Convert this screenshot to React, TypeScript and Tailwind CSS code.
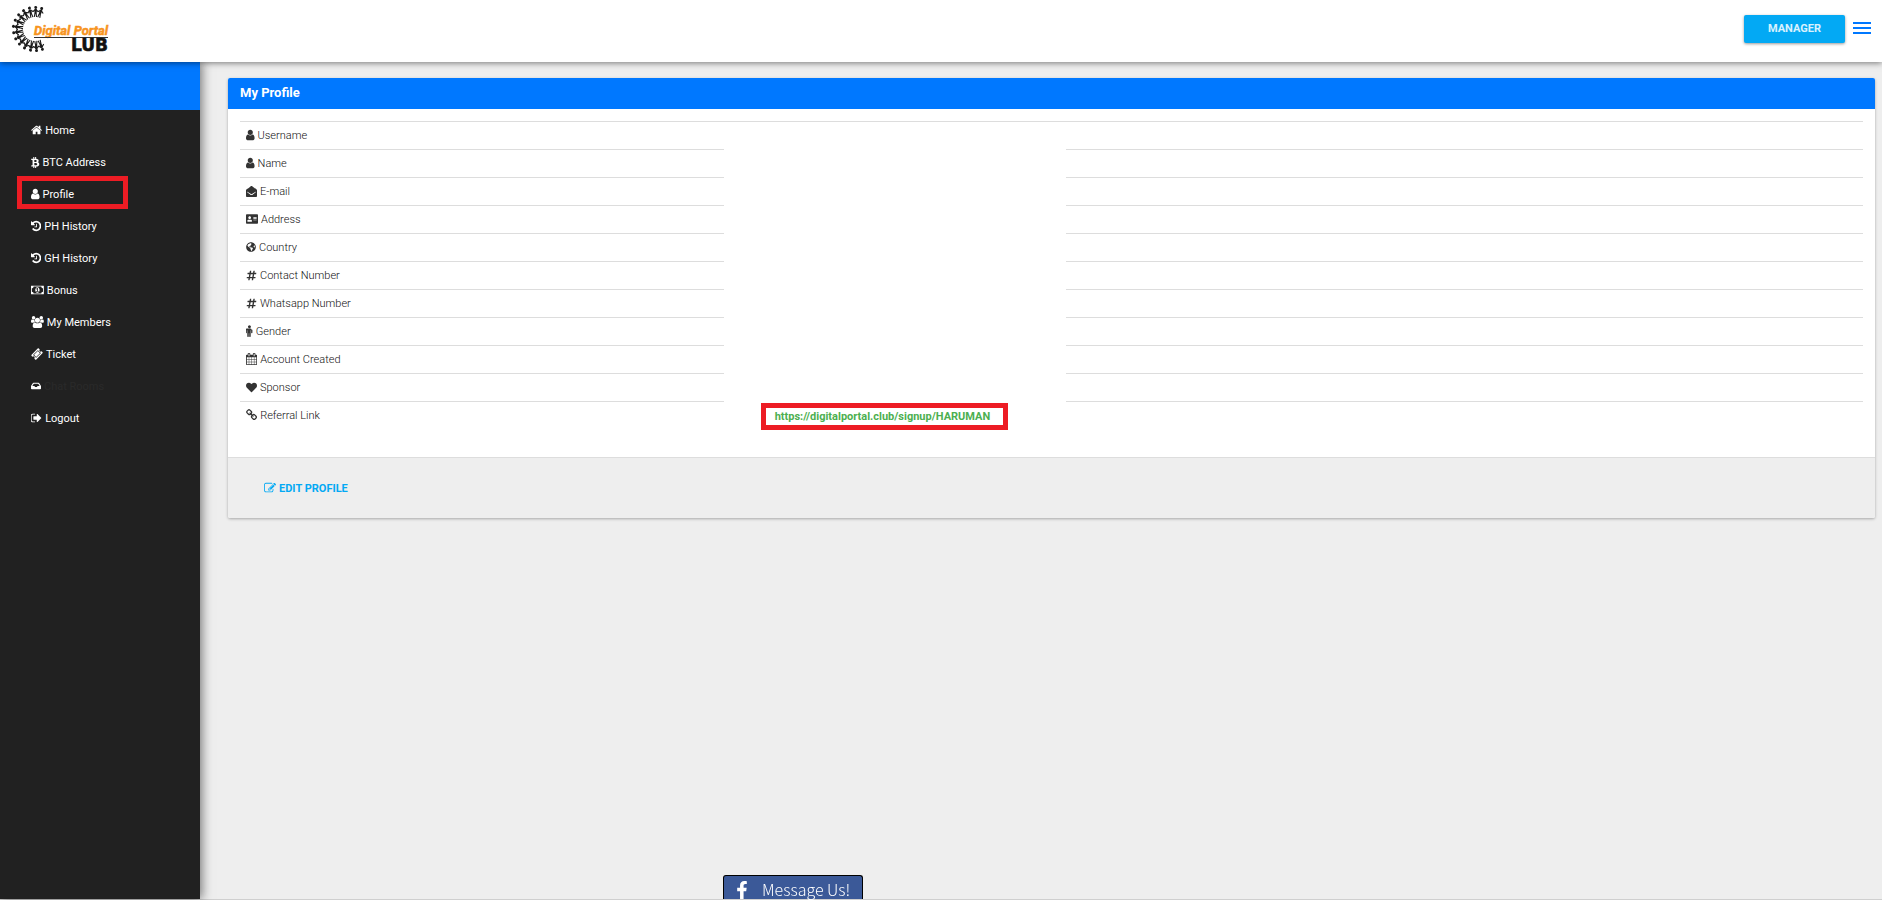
import type { ReactNode } from 'react';
import {
  FaAddressCard,
  FaEnvelopeOpen,
  FaFacebookF,
  FaGlobeAmericas,
  FaHashtag,
  FaHeart,
  FaInbox,
} from 'react-icons/fa';

const glyph = 'inline-block h-3 w-auto shrink-0';

function Glyph({ box, d }: { box: string; d: string }) {
  return (
    <svg viewBox={box} className={glyph} fill="currentColor" aria-hidden="true">
      <path d={d} />
    </svg>
  );
}

const HomeIcon = () => (
  <Glyph
    box="64 0 1664 1792"
    d="M1472 992v480q0 26-19 45t-45 19h-384v-384h-256v384h-384q-26 0-45-19t-19-45v-480q0-1 .5-3t.5-3l575-474 575 474q1 2 1 6zm223-69l-62 74q-8 9-21 11h-3q-13 0-21-7l-692-577-692 577q-12 8-24 7-13-2-21-11l-62-74q-8-10-7-23.5t11-21.5l719-599q32-26 76-26t76 26l244 204v-195q0-14 9-23t23-9h192q14 0 23 9t9 23v408l219 182q10 8 11 21.5t-7 23.5z"
  />
);
const BitcoinIcon = () => (
  <Glyph
    box="256 0 1280 1792"
    d="M1399 678q18 182-131 258 117 28 175 103t45 214q-7 71-32.5 125t-64.5 89-97 58.5-121.5 34.5-145.5 15v255h-154v-251q-80 0-122-1v252h-154v-255q-18 0-54-.5t-55-.5h-200l31-183h111q50 0 58-51v-402h16q-6-1-16-1v-287q-13-68-89-68h-111v-164l212 1q64 0 97-1v-252h154v247q82-2 122-2v-245h154v252q79 7 140 22.5t113 45 82.5 78 36.5 114.5zm-215 545q0-36-15-64t-37-46-57.5-30.5-65.5-18.5-74-9-69-3-64.5 1-47.5 1v338q8 0 37 .5t48 .5 53-1.5 58.5-4 57-8.5 55.5-14 47.5-21 39.5-30 24.5-40 9.5-51zm-71-476q0-33-12.5-58.5t-30.5-42-48-28-55-16.5-61.5-8-58-2.5-54 1-39.5.5v307q5 0 34.5.5t46.5 0 50-2 55-5.5 51.5-11 48.5-18.5 37-27 27-38.5 9-51z"
  />
);
const UserIcon = () => (
  <Glyph
    box="256 0 1280 1792"
    d="M1536 1399q0 109-62.5 187t-150.5 78h-854q-88 0-150.5-78t-62.5-187q0-85 8.5-160.5t31.5-152 58.5-131 94-89 134.5-34.5q131 128 313 128t313-128q76 0 134.5 34.5t94 89 58.5 131 31.5 152 8.5 160.5zm-256-887q0 159-112.5 271.5t-271.5 112.5-271.5-112.5-112.5-271.5 112.5-271.5 271.5-112.5 271.5 112.5 112.5 271.5z"
  />
);
const HistoryIcon = () => (
  <Glyph
    box="128 0 1536 1792"
    d="M1664 896q0 156-61 298t-164 245-245 164-298 61q-172 0-327-72.5t-264-204.5q-7-10-6.5-22.5t8.5-20.5l137-138q10-9 25-9 16 2 23 12 73 95 179 147t225 52q104 0 198.5-40.5t163.5-109.5 109.5-163.5 40.5-198.5-40.5-198.5-109.5-163.5-163.5-109.5-198.5-40.5q-98 0-188 35.5t-160 101.5l137 138q31 30 14 69-17 40-59 40h-448q-26 0-45-19t-19-45v-448q0-42 40-59 39-17 69 14l130 129q107-101 244.5-156.5t284.5-55.5q156 0 298 61t245 164 164 245 61 298zm-640-288v448q0 14-9 23t-23 9h-320q-14 0-23-9t-9-23v-64q0-14 9-23t23-9h224v-352q0-14 9-23t23-9h64q14 0 23 9t9 23z"
  />
);
const MoneyIcon = () => (
  <Glyph
    box="0 0 1920 1792"
    d="M768 1152h384v-96h-128v-448h-114l-148 137 77 80q42-37 55-57h2v288h-128v96zm512-256q0 70-21 142t-59.5 134-101.5 101-138 39-138-39-101.5-101-59.5-134-21-142 21-142 59.5-134 101.5-101 138-39 138 39 101.5 101 59.5 134 21 142zm512 256v-512q-106 0-181-75t-75-181h-1152q0 106-75 181t-181 75v512q106 0 181 75t75 181h1152q0-106 75-181t181-75zm128-832v1152q0 26-19 45t-45 19h-1792q-26 0-45-19t-19-45v-1152q0-26 19-45t45-19h1792q26 0 45 19t19 45z"
  />
);
const UsersIcon = () => (
  <Glyph
    box="64 0 1920 1792"
    d="M657 896q-162 5-265 128h-134q-82 0-138-40.5t-56-118.5q0-353 124-353 6 0 43.5 21t97.5 42.5 119 21.5q67 0 133-23-5 37-5 66 0 139 81 256zm1071 637q0 120-73 189.5t-194 69.5h-874q-121 0-194-69.5t-73-189.5q0-53 3.5-103.5t14-109 26.5-108.5 43-97.5 62-81 85.5-53.5 111.5-20q10 0 43 21.5t73 48 107 48 135 21.5 135-21.5 107-48 73-48 43-21.5q61 0 111.5 20t85.5 53.5 62 81 43 97.5 26.5 108.5 14 109 3.5 103.5zm-1024-1277q0 106-75 181t-181 75-181-75-75-181 75-181 181-75 181 75 75 181zm704 384q0 159-112.5 271.5t-271.5 112.5-271.5-112.5-112.5-271.5 112.5-271.5 271.5-112.5 271.5 112.5 112.5 271.5zm576 225q0 78-56 118.5t-138 40.5h-134q-103-123-265-128 81-117 81-256 0-29-5-66 66 23 133 23 59 0 119-21.5t97.5-42.5 43.5-21q124 0 124 353zm-128-609q0 106-75 181t-181 75-181-75-75-181 75-181 181-75 181 75 75 181z"
  />
);
const TicketIcon = () => (
  <Glyph
    box="0 0 1792 1792"
    d="M1024 452l316 316-572 572-316-316zm-211 979l618-618q19-19 19-45t-19-45l-362-362q-18-18-45-18t-45 18l-618 618q-19 19-19 45t19 45l362 362q18 18 45 18t45-18zm889-637l-907 908q-37 37-90.5 37t-90.5-37l-126-126q56-56 56-136t-56-136-136-56-136 56l-125-126q-37-37-37-90.5t37-90.5l907-906q37-37 90.5-37t90.5 37l125 125q-56 56-56 136t56 136 136 56 136-56l126 125q37 37 37 90.5t-37 90.5z"
  />
);
const SignOutIcon = () => (
  <Glyph
    box="96 0 1664 1792"
    d="M704 1440q0 4 1 20t.5 26.5-3 23.5-10 19.5-20.5 6.5h-320q-119 0-203.5-84.5t-84.5-203.5v-704q0-119 84.5-203.5t203.5-84.5h320q13 0 22.5 9.5t9.5 22.5q0 4 1 20t.5 26.5-3 23.5-10 19.5-20.5 6.5h-320q-66 0-113 47t-47 113v704q0 66 47 113t113 47h312l11.5 1 11.5 3 8 5.5 7 9 2 13.5zm928-544q0 26-19 45l-544 544q-19 19-45 19t-45-19-19-45v-288h-448q-26 0-45-19t-19-45v-384q0-26 19-45t45-19h448v-288q0-26 19-45t45-19 45 19l544 544q19 19 19 45z"
  />
);
const MaleIcon = () => (
  <Glyph
    box="384 0 1024 1792"
    d="M1344 704v416q0 40-28 68t-68 28-68-28-28-68v-352h-64v912q0 46-33 79t-79 33-79-33-33-79v-464h-64v464q0 46-33 79t-79 33-79-33-33-79v-912h-64v352q0 40-28 68t-68 28-68-28-28-68v-416q0-80 56-136t136-56h512q80 0 136 56t56 136zm-224-448q0 93-65.5 158.5t-158.5 65.5-158.5-65.5-65.5-158.5 65.5-158.5 158.5-65.5 158.5 65.5 65.5 158.5z"
  />
);
const CalendarIcon = () => (
  <Glyph
    box="64 0 1664 1792"
    d="M192 1664h288v-288h-288v288zm352 0h320v-288h-320v288zm-352-352h288v-320h-288v320zm352 0h320v-320h-320v320zm-352-384h288v-288h-288v288zm736 736h320v-288h-320v288zm-384-736h320v-288h-320v288zm768 736h288v-288h-288v288zm-384-352h320v-320h-320v320zm-352-864v-288q0-13-9.5-22.5t-22.5-9.5h-64q-13 0-22.5 9.5t-9.5 22.5v288q0 13 9.5 22.5t22.5 9.5h64q13 0 22.5-9.5t9.5-22.5zm736 864h288v-320h-288v320zm-384-384h320v-288h-320v288zm384 0h288v-288h-288v288zm32-480v-288q0-13-9.5-22.5t-22.5-9.5h-64q-13 0-22.5 9.5t-9.5 22.5v288q0 13 9.5 22.5t22.5 9.5h64q13 0 22.5-9.5t9.5-22.5zm384-64v1280q0 52-38 90t-90 38h-1408q-52 0-90-38t-38-90v-1280q0-52 38-90t90-38h128v-96q0-66 47-113t113-47h64q66 0 113 47t47 113v96h384v-96q0-66 47-113t113-47h64q66 0 113 47t47 113v96h128q52 0 90 38t38 90z"
  />
);
const ChainIcon = () => (
  <Glyph
    box="64 0 1664 1792"
    d="M1520 1216q0-40-28-68l-208-208q-28-28-68-28-42 0-72 32 3 3 19 18.5t21.5 21.5 15 19 13 25.5 3.5 27.5q0 40-28 68t-68 28q-15 0-27.5-3.5t-25.5-13-19-15-21.5-21.5-18.5-19q-33 31-33 73 0 40 28 68l206 207q27 27 68 27 40 0 68-26l147-146q28-28 28-67zm-703-705q0-40-28-68l-206-207q-28-28-68-28-39 0-68 27l-147 146q-28 28-28 67 0 40 28 68l208 208q27 27 68 27 42 0 72-31-3-3-19-18.5t-21.5-21.5-15-19-13-25.5-3.5-27.5q0-40 28-68t68-28q15 0 27.5 3.5t25.5 13 19 15 21.5 21.5 18.5 19q33-31 33-73zm895 705q0 120-85 203l-147 146q-83 83-203 83-121 0-204-85l-206-207q-83-83-83-203 0-123 88-209l-88-88q-86 88-208 88-120 0-204-84l-208-208q-84-84-84-204t85-203l147-146q83-83 203-83 121 0 204 85l206 207q83 83 83 203 0 123-88 209l88 88q86-88 208-88 120 0 204 84l208 208q84 84 84 204z"
  />
);
const EditIcon = () => (
  <Glyph
    box="0 0 1792 1792"
    d="M888 1184l116-116-152-152-116 116v56h96v96h56zm440-720q-16-16-33 1l-350 350q-17 17-1 33t33-1l350-350q17-17 1-33zm80 594v190q0 119-84.5 203.5t-203.5 84.5h-832q-119 0-203.5-84.5t-84.5-203.5v-832q0-119 84.5-203.5t203.5-84.5h832q63 0 117 25 15 7 18 23 3 17-9 29l-49 49q-14 14-32 8-23-6-45-6h-832q-66 0-113 47t-47 113v832q0 66 47 113t113 47h832q66 0 113-47t47-113v-126q0-13 9-22l64-64q15-15 35-7t20 29zm-96-738l288 288-672 672h-288v-288zm444 132l-92 92-288-288 92-92q28-28 68-28t68 28l152 152q28 28 28 68t-28 68z"
  />
);

const figureAngles = [18, 2, -15, -32, -49, -66, -83, -100, -117, -134, -151, -168, -184, -200];

function Logo() {
  return (
    <svg width="98" height="48" viewBox="0 0 98 48" className="overflow-visible" role="img" aria-label="Digital Portal Club">
      {figureAngles.map((angle) => (
        <g key={angle} transform={`translate(24 24) rotate(${angle})`} stroke="#1a1a1a" fill="#1a1a1a">
          <circle cx="0" cy="-21.6" r="1.5" stroke="none" />
          <path
            d="M-3 -17.2 L0 -19.6 L3 -17.2 M-0.6 -15.5 L-1.1 -12 M0.6 -15.5 L1.1 -12"
            fill="none"
            strokeWidth="1.1"
          />
          <path d="M-1.4 -19.8 H1.4 L1 -15 H-1 Z" stroke="none" />
        </g>
      ))}
      <text
        x="23"
        y="30"
        fill="#f7941e"
        stroke="#f7941e"
        strokeWidth="0.5"
        className="font-[Roboto,sans-serif] text-[13px] font-bold italic"
      >
        Digital Portal
      </text>
      <rect x="23" y="32" width="74" height="1" fill="#333" />
      <text
        x="97"
        y="46"
        textAnchor="end"
        fill="#111"
        stroke="#111"
        strokeWidth="0.6"
        className="font-['DejaVu_Sans',sans-serif] text-[17px] font-bold"
      >
        LUB
      </text>
    </svg>
  );
}

type NavItem = { icon: ReactNode; label: string; marked?: boolean; hidden?: boolean };

const navItems: NavItem[] = [
  { icon: <HomeIcon />, label: 'Home' },
  { icon: <BitcoinIcon />, label: 'BTC Address' },
  { icon: <UserIcon />, label: 'Profile', marked: true },
  { icon: <HistoryIcon />, label: 'PH History' },
  { icon: <HistoryIcon />, label: 'GH History' },
  { icon: <MoneyIcon />, label: 'Bonus' },
  { icon: <UsersIcon />, label: 'My Members' },
  { icon: <TicketIcon />, label: 'Ticket' },
  { icon: <FaInbox className="inline-block h-[10px] w-auto shrink-0" />, label: 'Chat Rooms', hidden: true },
  { icon: <SignOutIcon />, label: 'Logout' },
];

type Field = { icon: ReactNode; label: string; link?: string };

const fields: Field[] = [
  { icon: <UserIcon />, label: 'Username' },
  { icon: <UserIcon />, label: 'Name' },
  { icon: <FaEnvelopeOpen className="inline-block h-[11px] w-auto shrink-0" />, label: 'E-mail' },
  { icon: <FaAddressCard className={glyph} />, label: 'Address' },
  { icon: <FaGlobeAmericas className="inline-block h-[10px] w-auto shrink-0" />, label: 'Country' },
  { icon: <FaHashtag className="inline-block h-[11px] w-auto shrink-0" />, label: 'Contact Number' },
  { icon: <FaHashtag className="inline-block h-[11px] w-auto shrink-0" />, label: 'Whatsapp Number' },
  { icon: <MaleIcon />, label: 'Gender' },
  { icon: <CalendarIcon />, label: 'Account Created' },
  { icon: <FaHeart className="inline-block h-[11px] w-auto shrink-0" />, label: 'Sponsor' },
  { icon: <ChainIcon />, label: 'Referral Link', link: 'https://digitalportal.club/signup/HARUMAN' },
];

export default function App() {
  return (
    <div className="flex min-h-screen flex-col border-b border-[#cfcfcf] bg-[#eeeeee] font-[Roboto,sans-serif] text-[11px] leading-4 text-[#333333]">
      <header className="relative z-20 flex h-[62px] items-center justify-between bg-white px-[11px] shadow-[0_1px_6px_rgba(0,0,0,0.5)]">
        <a href="#home" className="-mt-1">
          <Logo />
        </a>
        <div className="-mt-1 flex items-center gap-2">
          <button
            type="button"
            className="h-7 rounded-[2px] bg-[#03a9f4] px-6 font-bold text-white/85 shadow-[0_1px_3px_rgba(0,0,0,0.4)]"
          >
            MANAGER
          </button>
          <button type="button" aria-label="Menu" className="flex w-[18px] flex-col gap-[3px] pb-[2px]">
            <span className="h-[2px] w-full bg-[#0078ff]" />
            <span className="h-[2px] w-full bg-[#0078ff]" />
            <span className="h-[2px] w-full bg-[#0078ff]" />
          </button>
        </div>
      </header>

      <div className="flex flex-1">
        <aside className="relative z-10 w-[200px] shrink-0 bg-[#212121] shadow-[2px_0_10px_rgba(0,0,0,0.5)]">
          <div className="h-12 bg-[#0078ff]" />
          <nav className="flex flex-col gap-[9px] px-[22px] pt-[7px]">
            {navItems.map(({ icon, label, marked, hidden }) => (
              <a
                key={label}
                href="#nav"
                className={`flex h-[23px] w-[101px] items-center gap-[3px] pt-[2px] pl-[9px] whitespace-nowrap text-white ${
                  marked ? 'outline-[5px] outline-[#ed1c24] outline-solid' : ''
                }`}
              >
                {icon}
                <span className={`pt-[2px] ${hidden ? 'text-[#2a2a2a]' : 'text-white'}`}>{label}</span>
              </a>
            ))}
          </nav>
        </aside>

        <main className="min-w-0 flex-1 pt-4 pr-[7px] pl-7">
          <section className="rounded-[2px] bg-white shadow-[0_1px_3px_rgba(0,0,0,0.3)]">
            <h1 className="flex h-[31px] items-center rounded-t-[2px] bg-[#0078ff] px-3 pb-[2px] text-[13px] font-bold text-white">
              My Profile
            </h1>
            <div className="px-3 pt-3 pb-7">
              <table className="w-full table-fixed border-separate border-spacing-0">
                <colgroup>
                  <col className="w-[29.8%]" />
                  <col className="w-[21.1%]" />
                  <col />
                </colgroup>
                <tbody>
                  {fields.map(({ icon, label, link }, row) => (
                    <tr key={label} className="h-7">
                      <th scope="row" className="border-t border-[#dddddd] p-0 pb-px pl-[6px] text-left font-light">
                        <span className="flex items-center gap-[3px]">
                          {icon}
                          <span className="pt-[2px] text-[#111111]">{label}</span>
                        </span>
                      </th>
                      <td className={`border-t p-0 pt-[2px] pl-[42px] ${row === 0 ? 'border-[#dddddd]' : 'border-transparent'}`}>
                        {link && (
                          <a
                            href={link}
                            className="flex h-[17px] w-[237px] items-center pl-[9px] font-bold text-[#4caf50] outline-[5px] outline-[#ed1c24] outline-solid"
                          >
                            {link}
                          </a>
                        )}
                      </td>
                      <td className="border-t border-[#dddddd] p-0" />
                    </tr>
                  ))}
                </tbody>
              </table>
            </div>
            <footer className="flex h-[61px] items-center rounded-b-[2px] border-t border-[#dddddd] bg-[#eeeeee] px-9 pb-px">
              <button type="button" className="flex items-center gap-[3px] font-bold text-[#03a9f4]">
                <EditIcon />
                <span className="pt-[2px]">EDIT PROFILE</span>
              </button>
            </footer>
          </section>
        </main>
      </div>

      <button
        type="button"
        className="fixed bottom-px left-[723px] z-30 flex h-6 w-[140px] items-start gap-[11px] rounded-t-[3px] border border-b-0 border-black bg-[#3b5998] pt-[5px] pl-[9px] text-white"
      >
        <FaFacebookF className="h-[18px] w-auto shrink-0" />
        <span className="font-['Noto_Sans_CJK_JP',sans-serif] text-[16px] leading-[17px] font-light whitespace-nowrap">
          Message Us!
        </span>
      </button>
    </div>
  );
}
